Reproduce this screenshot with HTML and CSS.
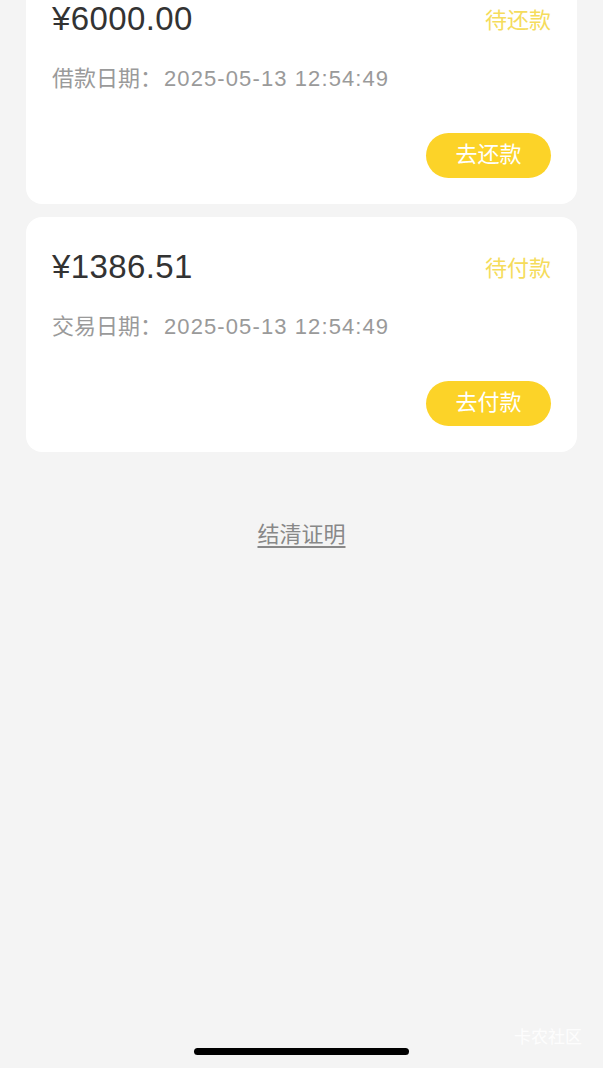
FILE: index.html
```html
<!DOCTYPE html>
<html lang="zh">
<head>
<meta charset="utf-8">
<link rel="stylesheet" href="styles.css">
</head>
<body>
<div class="page">
  <div class="list">
    <div class="card">
      <div class="row">
        <span class="amount">¥6000.00</span>
        <span class="status">待还款</span>
      </div>
      <div class="date"><span class="date-label">借款日期：</span><span class="date-value">2025-05-13 12:54:49</span></div>
      <div class="actions"><button class="btn">去还款</button></div>
    </div>
    <div class="card">
      <div class="row">
        <span class="amount">¥1386.51</span>
        <span class="status">待付款</span>
      </div>
      <div class="date"><span class="date-label">交易日期：</span><span class="date-value">2025-05-13 12:54:49</span></div>
      <div class="actions"><button class="btn">去付款</button></div>
    </div>
  </div>
  <div class="proof"><a class="proof-link">结清证明</a></div>
  <div class="spacer"></div>
  <div class="bottom">
    <div class="home-bar"></div>
    <span class="watermark">卡农社区</span>
  </div>
</div>
</body>
</html>
```

FILE: styles.css
```css
html, body {
  margin: 0;
  padding: 0;
  background: #f4f4f4;
  font-family: "Liberation Sans", "Noto Sans CJK SC", sans-serif;
}
.page {
  height: 1068px;
  overflow: hidden;
  display: flex;
  flex-direction: column;
}
.list {
  margin: -31px 26px 0;
  display: flex;
  flex-direction: column;
  gap: 13px;
}
.card {
  background: #fff;
  border-radius: 16px;
  padding: 30px 26px 26px;
  display: flex;
  flex-direction: column;
}
.row {
  display: flex;
  justify-content: space-between;
  align-items: center;
  height: 40px;
}
.amount {
  font-size: 33px;
  color: #333;
  letter-spacing: 0.4px;
}
.status {
  font-size: 22px;
  color: #f5dc5c;
  padding-bottom: 3px;
}
.date {
  margin-top: 25px;
  line-height: 30px;
  color: #9a9a9a;
  display: flex;
  align-items: center;
}
.date-label {
  font-size: 22px;
  margin-right: 2px;
}
.date-value {
  font-size: 22px;
  letter-spacing: 1.1px;
}
.actions {
  margin-top: 39px;
  display: flex;
  justify-content: flex-end;
}
.btn {
  width: 125px;
  height: 45px;
  border: none;
  border-radius: 23px;
  background: #fcd328;
  color: #fff;
  font-family: "Liberation Sans", "Noto Sans CJK SC", sans-serif;
  font-size: 22px;
  line-height: 40px;
  padding: 0 0 1px;
}
.proof {
  margin-top: 68px;
  text-align: center;
  line-height: 30px;
}
.proof-link {
  font-size: 22px;
  color: #888;
  text-decoration: underline;
  text-underline-offset: 4px;
}
.spacer {
  flex: 1;
}
.bottom {
  position: relative;
  height: 28px;
  display: flex;
  justify-content: center;
}
.home-bar {
  margin-top: 8px;
  width: 215px;
  height: 7px;
  border-radius: 4px;
  background: #000;
}
.watermark {
  position: absolute;
  right: 21px;
  top: -17px;
  font-size: 17px;
  color: rgba(255, 255, 255, 0.9);
}
```
